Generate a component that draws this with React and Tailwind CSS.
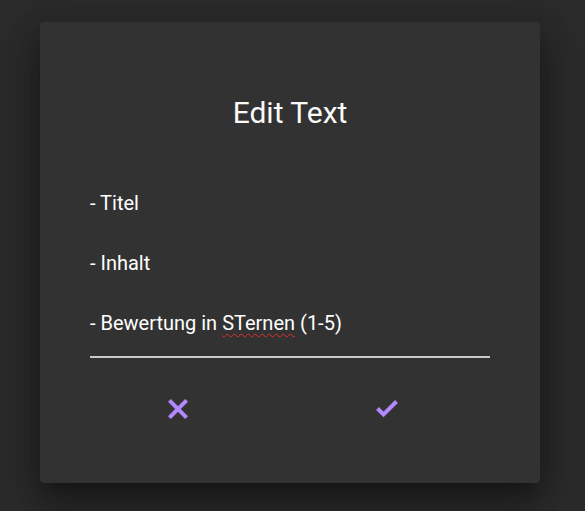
export default function App() {
  return (
    <div
      className="min-h-screen w-full bg-[#2b2b2b] pl-[40px] pt-[22px]"
      style={{ fontFamily: "Roboto, 'Noto Sans', sans-serif" }}
    >
      <div className="flex h-[461px] w-[500px] flex-col rounded-[4px] bg-[#323232] px-[50px] pt-[73px] text-white shadow-[0_11px_15px_-7px_rgba(0,0,0,0.3),0_24px_38px_3px_rgba(0,0,0,0.22),0_9px_46px_8px_rgba(0,0,0,0.2)]">
        <h2 className="text-center text-[30px] leading-[35px] font-normal text-[#fafafa]">
          Edit Text
        </h2>
        <div className="mt-[58px] border-b-2 border-[#c8c8c8] pb-[18px] text-[20px] leading-[30px] text-white">
          <div>- Titel</div>
          <div className="h-[30px]"></div>
          <div>- Inhalt</div>
          <div className="h-[30px]"></div>
          <div>
            - Bewertung in{" "}
            <span className="underline decoration-wavy decoration-[#e0302a] decoration-1 underline-offset-[3px]">
              STernen
            </span>{" "}
            (1-5)
          </div>
        </div>
        <div className="mt-[39px] flex items-center">
          <svg
            className="ml-[76px] block"
            width="24"
            height="24"
            viewBox="0 0 24 24"
            fill="none"
            stroke="#b388ff"
            strokeWidth="4"
          >
            <line x1="3.4" y1="3.4" x2="20.6" y2="20.6" />
            <line x1="20.6" y1="3.4" x2="3.4" y2="20.6" />
          </svg>
          <svg
            className="ml-[185px] block"
            width="24"
            height="24"
            viewBox="0 0 24 24"
            fill="none"
            stroke="#b388ff"
            strokeWidth="4"
          >
            <polyline points="2.5,11.5 8.5,17.5 21.5,4.5" />
          </svg>
        </div>
      </div>
    </div>
  );
}
